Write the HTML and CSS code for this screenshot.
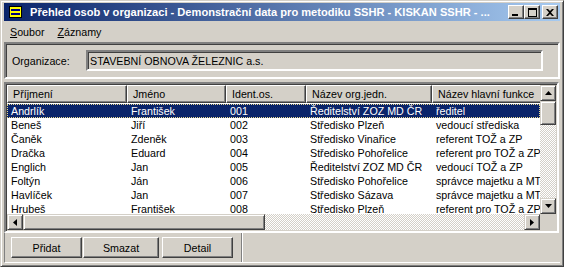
FILE: index.html
```html
<!DOCTYPE html>
<html>
<head>
<meta charset="utf-8">
<link rel="stylesheet" href="styles.css">
</head>
<body>
<div class="window">
  <div class="titlebar">
    <svg class="app-icon" width="13" height="12" viewBox="0 0 13 12">
      <rect x="0.5" y="0.5" width="12" height="11" fill="#ffff00" stroke="#000"/>
      <rect x="2" y="3" width="9" height="2" fill="#000080"/>
      <rect x="2" y="7" width="9" height="2" fill="#000080"/>
    </svg>
    <span class="title">Přehled osob v organizaci - Demonstrační data pro metodiku SSHR - KISKAN SSHR - ...</span>
    <div class="caption-buttons">
      <span class="cap"><svg width="8" height="7" viewBox="0 0 8 7"><rect x="0" y="5" width="6" height="2" fill="#000"/></svg></span>
      <span class="cap"><svg width="9" height="9" viewBox="0 0 9 9"><rect x="0.5" y="0.5" width="8" height="8" fill="none" stroke="#000"/><rect x="0" y="0" width="9" height="2" fill="#000"/></svg></span>
      <span class="cap cap-close"><svg width="8" height="7" viewBox="0 0 8 7"><path d="M0 0h2l2 2 2-2h2L5 3.5 8 7H6L4 5 2 7H0l3-3.5z" fill="#000"/></svg></span>
    </div>
  </div>

  <div class="menubar">
    <span class="menu"><u>S</u>oubor</span>
    <span class="menu"><u>Z</u>áznamy</span>
  </div>

  <div class="org-panel">
    <span class="org-label">Organizace:</span>
    <div class="org-field">STAVEBNÍ OBNOVA ŽELEZNIC a.s.</div>
  </div>

  <div class="list">
    <div class="grid-view">
      <div class="row header">
        <span class="c c1">Příjmení</span><span class="c c2">Jméno</span><span class="c c3">Ident.os.</span><span class="c c4">Název org.jedn.</span><span class="c c5">Název hlavní funkce</span>
      </div>
      <div class="row selected">
        <span class="c c1">Andrlík</span><span class="c c2">František</span><span class="c c3">001</span><span class="c c4">Ředitelství ZOZ MD ČR</span><span class="c c5">ředitel</span>
      </div>
      <div class="row">
        <span class="c c1">Beneš</span><span class="c c2">Jiří</span><span class="c c3">002</span><span class="c c4">Středisko Plzeň</span><span class="c c5">vedoucí střediska</span>
      </div>
      <div class="row">
        <span class="c c1">Čaněk</span><span class="c c2">Zdeněk</span><span class="c c3">003</span><span class="c c4">Středisko Vinařice</span><span class="c c5">referent TOŽ a ZP</span>
      </div>
      <div class="row">
        <span class="c c1">Dračka</span><span class="c c2">Eduard</span><span class="c c3">004</span><span class="c c4">Středisko Pohořelice</span><span class="c c5">referent pro TOŽ a ZP</span>
      </div>
      <div class="row">
        <span class="c c1">Englich</span><span class="c c2">Jan</span><span class="c c3">005</span><span class="c c4">Ředitelství ZOZ MD ČR</span><span class="c c5">vedoucí TOŽ a ZP</span>
      </div>
      <div class="row">
        <span class="c c1">Foltýn</span><span class="c c2">Ján</span><span class="c c3">006</span><span class="c c4">Středisko Pohořelice</span><span class="c c5">správce majetku a MT</span>
      </div>
      <div class="row">
        <span class="c c1">Havlíček</span><span class="c c2">Jan</span><span class="c c3">007</span><span class="c c4">Středisko Sázava</span><span class="c c5">správce majetku a MT</span>
      </div>
      <div class="row">
        <span class="c c1">Hrubeš</span><span class="c c2">František</span><span class="c c3">008</span><span class="c c4">Středisko Plzeň</span><span class="c c5">referent pro TOŽ a ZP</span>
      </div>
    </div>
    <div class="vscroll">
      <span class="sbtn"><svg width="7" height="4" viewBox="0 0 7 4"><path d="M3.5 0L7 4H0z" fill="#000"/></svg></span>
      <span class="sthumb"></span>
      <span class="strack"></span>
      <span class="sbtn"><svg width="7" height="4" viewBox="0 0 7 4"><path d="M0 0h7L3.5 4z" fill="#000"/></svg></span>
    </div>
    <div class="hscroll">
      <span class="sbtn"><svg width="4" height="7" viewBox="0 0 4 7"><path d="M4 0v7L0 3.5z" fill="#000"/></svg></span>
      <span class="sthumb"></span>
      <span class="strack"></span>
      <span class="sbtn"><svg width="4" height="7" viewBox="0 0 4 7"><path d="M0 0v7l4-3.5z" fill="#000"/></svg></span>
    </div>
    <div class="corner"></div>
  </div>

  <div class="button-panel">
    <div class="btn-group">
      <span class="btn">Přidat</span>
      <span class="btn">Smazat</span>
    </div>
    <span class="btn">Detail</span>
    <span class="sep"></span>
  </div>
</div>
</body>
</html>
```

FILE: styles.css
```css
* { box-sizing: border-box; }
html, body { margin: 0; padding: 0; background: #d4d0c8; }
body {
  font-family: "Liberation Sans", Arial, sans-serif;
  font-size: 10.7px;
  color: #000;
}
.window {
  width: 564px;
  height: 267px;
  background: #d4d0c8;
  border: 1px solid;
  border-color: #d4d0c8 #404040 #404040 #d4d0c8;
  box-shadow: inset 1px 1px #fff, inset -1px -1px #808080;
  padding: 2px 3px 3px 3px;
  display: flex;
  flex-direction: column;
}

/* Title bar */
.titlebar {
  height: 18px;
  flex: none;
  background: linear-gradient(to right, #0a246a, #a6caf0);
  display: flex;
  align-items: center;
  padding-left: 5px;
  color: #fff;
}
.app-icon { flex: none; margin-right: 8px; }
.title {
  flex: 1;
  font-weight: bold;
  font-size: 11.1px;
  white-space: nowrap;
  overflow: hidden;
}
.caption-buttons { display: flex; align-items: center; padding-right: 2px; }
.cap {
  width: 16px;
  height: 14px;
  background: #d4d0c8;
  border: 1px solid;
  border-color: #fff #404040 #404040 #fff;
  box-shadow: inset -1px -1px #808080;
  display: flex;
  align-items: center;
  justify-content: center;
}
.cap-close { margin-left: 2px; }

/* Menu */
.menubar {
  height: 19px;
  flex: none;
  display: flex;
  align-items: center;
  padding-left: 6px;
  gap: 13px;
  padding-top: 2px;
}
.menu u { text-decoration: underline; }

/* Organisation panel */
.org-panel {
  margin-top: 2px;
  height: 37px;
  flex: none;
  border: 2px solid;
  border-color: #808080 #fff #fff #808080;
  box-shadow: inset 1px 1px #404040;
  display: flex;
  align-items: center;
  padding: 0 15px 0 4px;
}
.org-label { width: 76px; flex: none; padding-left: 2px; }
.org-field {
  flex: 1;
  height: 21px;
  border: 2px solid;
  border-color: #808080 #fff #fff #808080;
  box-shadow: inset 1px 1px #404040, inset -1px -1px #d4d0c8;
  padding-left: 2px;
  display: flex;
  align-items: center;
  font-size: 10.7px;
}

/* List */
.list {
  margin-top: 3px;
  margin-right: 1px;
  height: 151px;
  flex: none;
  border: 2px solid;
  border-color: #808080 #fff #fff #808080;
  box-shadow: inset 1px 1px #404040, inset -1px -1px #d4d0c8;
  background: #fff;
  display: grid;
  grid-template-columns: 1fr 16px;
  grid-template-rows: 1fr 16px;
  padding: 1px;
}
.grid-view { overflow: hidden; background: #fff; }
.row {
  display: flex;
  height: 14px;
  align-items: center;
  white-space: nowrap;
}
.row .c { flex: none; padding-left: 4px; overflow: hidden; }
.c1 { width: 120px; }
.c2 { width: 99px; }
.c3 { width: 80px; }
.c4 { width: 126px; }
.c5 { width: 130px; }
.row.header {
  height: 18px;
  margin-bottom: 1px;
}
.row.header .c {
  height: 18px;
  background: #d4d0c8;
  border: 1px solid;
  border-color: #fff #404040 #404040 #fff;
  box-shadow: inset -1px -1px #808080;
  padding-left: 5px;
  display: flex;
  align-items: center;
}
.row.selected {
  background: #0a246a;
  color: #fff;
  outline: 1px dotted #e8d890;
  outline-offset: -1px;
}

.vscroll { display: flex; flex-direction: column; }
.hscroll { display: flex; }
.sbtn {
  flex: none;
  width: 16px;
  height: 16px;
  background: #d4d0c8;
  border: 1px solid;
  border-color: #d4d0c8 #404040 #404040 #d4d0c8;
  box-shadow: inset 1px 1px #fff, inset -1px -1px #808080;
  display: flex;
  align-items: center;
  justify-content: center;
}
.sthumb {
  flex: none;
  background: #d4d0c8;
  border: 1px solid;
  border-color: #d4d0c8 #404040 #404040 #d4d0c8;
  box-shadow: inset 1px 1px #fff, inset -1px -1px #808080;
}
.vscroll .sthumb { height: 24px; }
.hscroll .sthumb { width: 242px; }
.strack {
  flex: 1;
  background: repeating-conic-gradient(#fff 0 25%, #d4d0c8 0 50%) 0 0 / 2px 2px;
}
.corner { background: #d4d0c8; }

/* Button panel */
.button-panel {
  flex: 1;
  display: flex;
  align-items: center;
  padding-left: 6px;
  gap: 3px;
  border-left: 1px solid #808080;
  border-bottom: 1px solid #fff;
}
.btn-group { display: flex; gap: 1px; }
.btn {
  height: 21px;
  width: 71px;
  background: #d4d0c8;
  border: 1px solid;
  border-color: #fff #404040 #404040 #fff;
  box-shadow: inset -1px -1px #808080;
  display: flex;
  align-items: center;
  justify-content: center;
}
.btn-group .btn + .btn { width: 76px; }
.sep {
  align-self: stretch;
  margin-left: 5px;
  width: 2px;
  border-left: 1px solid #808080;
  border-right: 1px solid #fff;
}
```
